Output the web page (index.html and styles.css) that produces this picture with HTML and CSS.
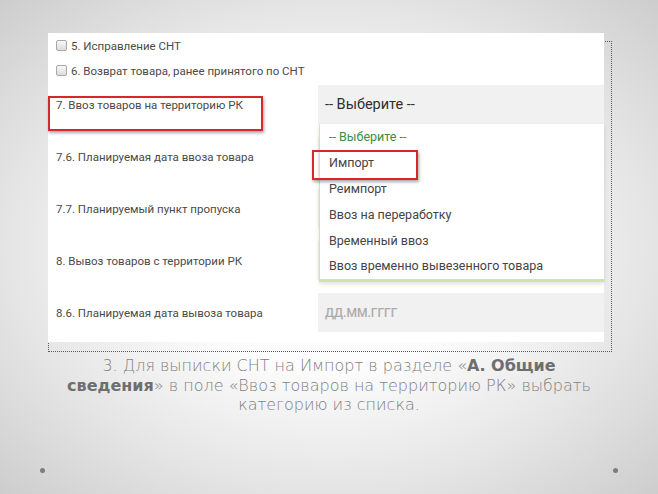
FILE: index.html
```html
<!DOCTYPE html>
<html lang="ru">
<head>
<meta charset="utf-8">
<title>СНТ — Ввоз товаров</title>
<link rel="stylesheet" href="styles.css">
</head>
<body>
<div class="slide">
  <div class="frame">
    <div class="panel">
      <div class="check-row"><span class="cb"></span><span>5. Исправление СНТ</span></div>
      <div class="check-row"><span class="cb"></span><span>6. Возврат товара, ранее принятого по СНТ</span></div>
      <div class="form">
        <div class="label label-mark">7. Ввоз товаров на территорию РК<span class="mark mark-label"></span></div>
        <div class="field select">
          <span>-- Выберите --</span>
          <ul class="dropdown">
            <li class="opt opt-default">-- Выберите --</li>
            <li class="opt">Импорт<span class="mark mark-opt"></span></li>
            <li class="opt">Реимпорт</li>
            <li class="opt">Ввоз на переработку</li>
            <li class="opt">Временный ввоз</li>
            <li class="opt">Ввоз временно вывезенного товара</li>
          </ul>
        </div>
        <div class="label">7.6. Планируемая дата ввоза товара</div>
        <div class="field"></div>
        <div class="label">7.7. Планируемый пункт пропуска</div>
        <div class="field"></div>
        <div class="label">8. Вывоз товаров с территории РК</div>
        <div class="field"></div>
        <div class="label">8.6. Планируемая дата вывоза товара</div>
        <div class="field date">ДД.ММ.ГГГГ</div>
      </div>
    </div>
  </div>
  <p class="caption">3. Для выписки СНТ на Импорт в разделе «<b>А. Общие</b><br><b>сведения</b>» в поле «Ввоз товаров на территорию РК» выбрать<br>категорию из списка.</p>
  <div class="dots"><span class="dot"></span><span class="dot"></span></div>
</div>
</body>
</html>
```

FILE: styles.css
```css
html, body {
  margin: 0;
  padding: 0;
}
body {
  width: 658px;
  height: 494px;
  overflow: hidden;
}
.slide {
  width: 658px;
  height: 494px;
  display: flex;
  flex-direction: column;
  background: radial-gradient(ellipse farthest-corner at 50% 50%, #ffffff 0%, #fcfcfc 35%, #e4e4e4 70%, #cdcdcd 100%);
  font-family: Roboto, "Liberation Sans", sans-serif;
}
.frame {
  margin: 41px 0 0 48px;
  width: 562px;
  border: 1px dotted #5a5a5a;
}
.panel {
  margin: -9px 7px 9px -1px;
  height: 309px;
  background: #fff;
  padding-left: 8px;
  box-sizing: border-box;
}
.check-row {
  height: 25px;
  display: flex;
  align-items: center;
  gap: 4px;
  font-size: 11.5px;
  color: #4a4a4a;
}
.cb {
  width: 9px;
  height: 9px;
  border: 1px solid #a8a8a8;
  border-radius: 2px;
  background: linear-gradient(#f8f8f8, #dcdcdc);
}
.form {
  margin-top: 2px;
  display: grid;
  grid-template-columns: 262px 286px;
  grid-auto-rows: 39px;
  row-gap: 13px;
}
.label {
  display: flex;
  align-items: center;
  font-size: 11.5px;
  color: #4a4a4a;
  padding-top: 1px;
}
.label-mark {
  position: relative;
}
.field {
  background: #f1f1f1;
  position: relative;
}
.select {
  display: flex;
  align-items: center;
  padding-left: 7px;
  font-size: 14.5px;
  color: #2f2f2f;
  z-index: 2;
}
.dropdown {
  position: absolute;
  top: 39px;
  left: 1px;
  right: 0;
  margin: 0;
  padding: 0;
  list-style: none;
  background: #fff;
  border-left: 1px solid #d3e3bd;
  border-bottom: 3px solid #cfe3aa;
  box-shadow: 0 2px 4px rgba(0, 0, 0, 0.12);
}
.opt {
  position: relative;
  height: 25.8px;
  display: flex;
  align-items: center;
  padding-left: 9px;
  font-size: 12.5px;
  color: #444;
}
.opt-default {
  color: #3f8b3f;
}
.date {
  display: flex;
  align-items: center;
  padding-left: 7px;
  font-size: 12px;
  font-weight: 500;
  color: #ababab;
}
.mark {
  position: absolute;
  border: 2px solid #d7262c;
  box-shadow: 1px 2px 3px rgba(0, 0, 0, 0.35);
  box-sizing: border-box;
}
.mark-label {
  left: -8px;
  top: 11px;
  width: 215px;
  height: 35px;
}
.mark-opt {
  left: -8px;
  top: 0;
  width: 106px;
  height: 30px;
}
.caption {
  margin: 4px 0 0;
  text-align: center;
  font-family: "DejaVu Sans", sans-serif;
  font-weight: 200;
  font-size: 16px;
  line-height: 19.5px;
  color: #7f7f7f;
}
.caption b {
  font-weight: bold;
  color: #6e6e6e;
}
.dots {
  margin-top: auto;
  margin-bottom: 21px;
  display: flex;
  justify-content: space-between;
  padding: 0 40px;
}
.dot {
  width: 5px;
  height: 5px;
  border-radius: 50%;
  background: #7d7d7d;
}
```
